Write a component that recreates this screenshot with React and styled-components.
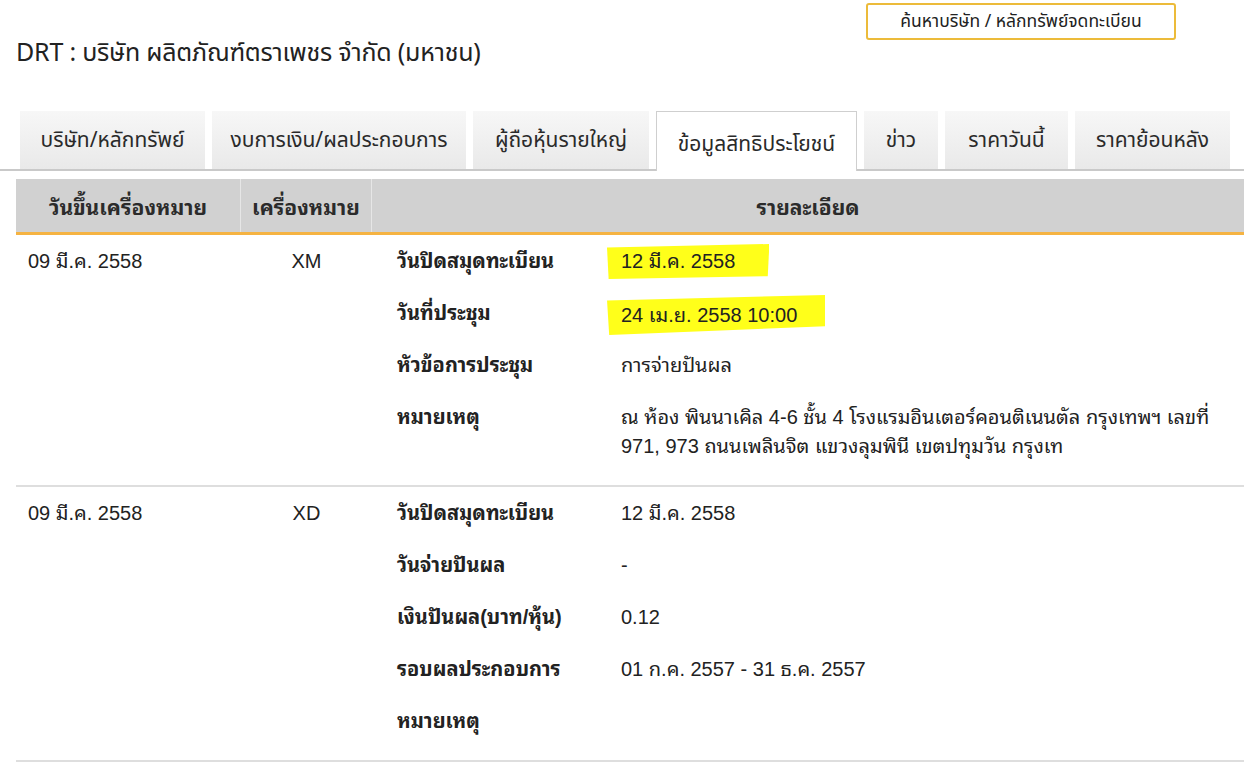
import styled, { createGlobalStyle } from 'styled-components';

const GlobalStyle = createGlobalStyle`
  html, body {
    margin: 0;
    padding: 0;
    background: #fff;
  }
  body {
    font-family: "Liberation Sans", "Noto Sans Thai Looped", "Noto Sans Thai", "Noto Sans", sans-serif;
    color: #222;
  }
`

const Page = styled.div`
    width: 1258px;
    min-height: 769px;
`
const TopBar = styled.div`
    display: flex;
    justify-content: flex-end;
    padding: 3px 82px 0 0;
`
const SearchButton = styled.button`
    width: 310px;
    height: 37px;
    border: 2px solid #ecbb3a;
    border-radius: 3px;
    background: #fff;
    font-family: "Noto Sans Thai", "Liberation Sans", sans-serif;
    font-size: 17.5px;
    color: #222;
    cursor: pointer;
`
const Title = styled.h1`
    margin: 0 0 0 16px;
    font-family: "Noto Sans Thai", "Liberation Sans", sans-serif;
    font-weight: 400;
    font-size: 25px;
    line-height: 27px;
    letter-spacing: -0.2px;
    color: #222;
`
const TabBar = styled.div`
    display: flex;
    gap: 7px;
    width: 1224px;
    margin-top: 44px;
    padding-left: 20px;
    border-bottom: 2px solid #c9c9c9;
`
const Tab = styled.div`
    width: ${p => p.$w}px;
    box-sizing: border-box;
    display: flex;
    align-items: center;
    justify-content: center;
    font-family: "Noto Sans Thai", "Liberation Sans", sans-serif;
    font-size: 21px;
    color: #2a2a2a;
    background: ${p => p.$active ? '#fff' : 'linear-gradient(#f7f7f7, #e9e9e9)'};
    border: ${p => p.$active ? '1px solid #cfcfcf' : 'none'};
    border-bottom: none;
    margin-bottom: ${p => p.$active ? '-2px' : '0'};
    height: ${p => p.$active ? '60px' : '58px'};
    padding-top: ${p => p.$active ? '6px' : '0'};
`
const Table = styled.div`
    width: 1228px;
    margin: 8px 0 0 16px;
`
const HeadRow = styled.div`
    display: grid;
    grid-template-columns: 224px 130px 1fr;
    gap: 1px;
    background: #e6e6e6;
    border-bottom: 3px solid #f5b342;
`
const HeadCell = styled.div`
    height: 53px;
    display: flex;
    align-items: center;
    justify-content: center;
    background: #d1d1d1;
    font-weight: 700;
    font-size: 21px;
    color: #2b2b2b;
`
const Row = styled.div`
    display: grid;
    grid-template-columns: 225px 131px 1fr;
    padding-bottom: 13px;
    border-bottom: 2px solid #dedede;
`
const Cell = styled.div`
    height: 28px;
    padding: 12px 0 0 ${p => p.$pl || 0}px;
    text-align: ${p => p.$center ? 'center' : 'left'};
    font-size: 20px;
    line-height: 28px;
    color: #222;
`
const Details = styled.div`
    padding-left: 25px;
`
const DetailItem = styled.div`
    display: grid;
    grid-template-columns: 224px 1fr;
    height: ${p => p.$lines * 29 - 1}px;
    padding: 12px 0;
    font-size: 20px;
    line-height: ${p => p.$lines > 1 ? 29 : 28}px;
    color: #222;
`
const Label = styled.div`
    font-weight: 700;
`
const Value = styled.div`
    padding-right: 30px;
`
const Marker = styled.span`
    display: inline-block;
    background: #ffff1a;
    margin: -4px 0 -4px -14px;
    padding: ${p => p.$tall ? '6px 28px 6px 14px' : '3px 34px 4px 14px'};
    clip-path: ${p => p.$tall
        ? 'polygon(0 14%, 100% 0, 100% 78%, 1% 100%)'
        : 'polygon(0 10%, 100% 0, 99% 92%, 1% 100%)'};
`

const rows = [
    {
        date: '09 มี.ค. 2558',
        sign: 'XM',
        items: [
            ['วันปิดสมุดทะเบียน', <Marker key="a">12 มี.ค. 2558</Marker>],
            ['วันที่ประชุม', <Marker key="b" $tall>24 เม.ย. 2558 10:00</Marker>],
            ['หัวข้อการประชุม', 'การจ่ายปันผล'],
            ['หมายเหตุ', 'ณ ห้อง พินนาเคิล 4-6 ชั้น 4 โรงแรมอินเตอร์คอนติเนนตัล กรุงเทพฯ เลขที่ 971, 973 ถนนเพลินจิต แขวงลุมพินี เขตปทุมวัน กรุงเท', 2],
        ],
    },
    {
        date: '09 มี.ค. 2558',
        sign: 'XD',
        items: [
            ['วันปิดสมุดทะเบียน', '12 มี.ค. 2558'],
            ['วันจ่ายปันผล', '-'],
            ['เงินปันผล(บาท/หุ้น)', '0.12'],
            ['รอบผลประกอบการ', '01 ก.ค. 2557 - 31 ธ.ค. 2557'],
            ['หมายเหตุ', ''],
        ],
    },
]

const tabs = [
    ['บริษัท/หลักทรัพย์', 185],
    ['งบการเงิน/ผลประกอบการ', 254],
    ['ผู้ถือหุ้นรายใหญ่', 176],
    ['ข้อมูลสิทธิประโยชน์', 201, true],
    ['ข่าว', 74],
    ['ราคาวันนี้', 123],
    ['ราคาย้อนหลัง', 155],
]

function App() {
  return (
    <Page>
        <GlobalStyle />
        <TopBar>
            <SearchButton>ค้นหาบริษัท / หลักทรัพย์จดทะเบียน</SearchButton>
        </TopBar>
        <Title>DRT : บริษัท ผลิตภัณฑ์ตราเพชร จำกัด (มหาชน)</Title>
        <TabBar>
            {tabs.map(([name, w, active]) => (
                <Tab key={name} $w={w} $active={active}>{name}</Tab>
            ))}
        </TabBar>
        <Table>
            <HeadRow>
                <HeadCell>วันขึ้นเครื่องหมาย</HeadCell>
                <HeadCell>เครื่องหมาย</HeadCell>
                <HeadCell>รายละเอียด</HeadCell>
            </HeadRow>
            {rows.map((r) => (
                <Row key={r.sign}>
                    <Cell $pl={12}>{r.date}</Cell>
                    <Cell $center>{r.sign}</Cell>
                    <Details>
                        {r.items.map(([label, value, lines = 1]) => (
                            <DetailItem key={label} $lines={lines}>
                                <Label>{label}</Label>
                                <Value>{value}</Value>
                            </DetailItem>
                        ))}
                    </Details>
                </Row>
            ))}
        </Table>
    </Page>
  )
}

export default App
